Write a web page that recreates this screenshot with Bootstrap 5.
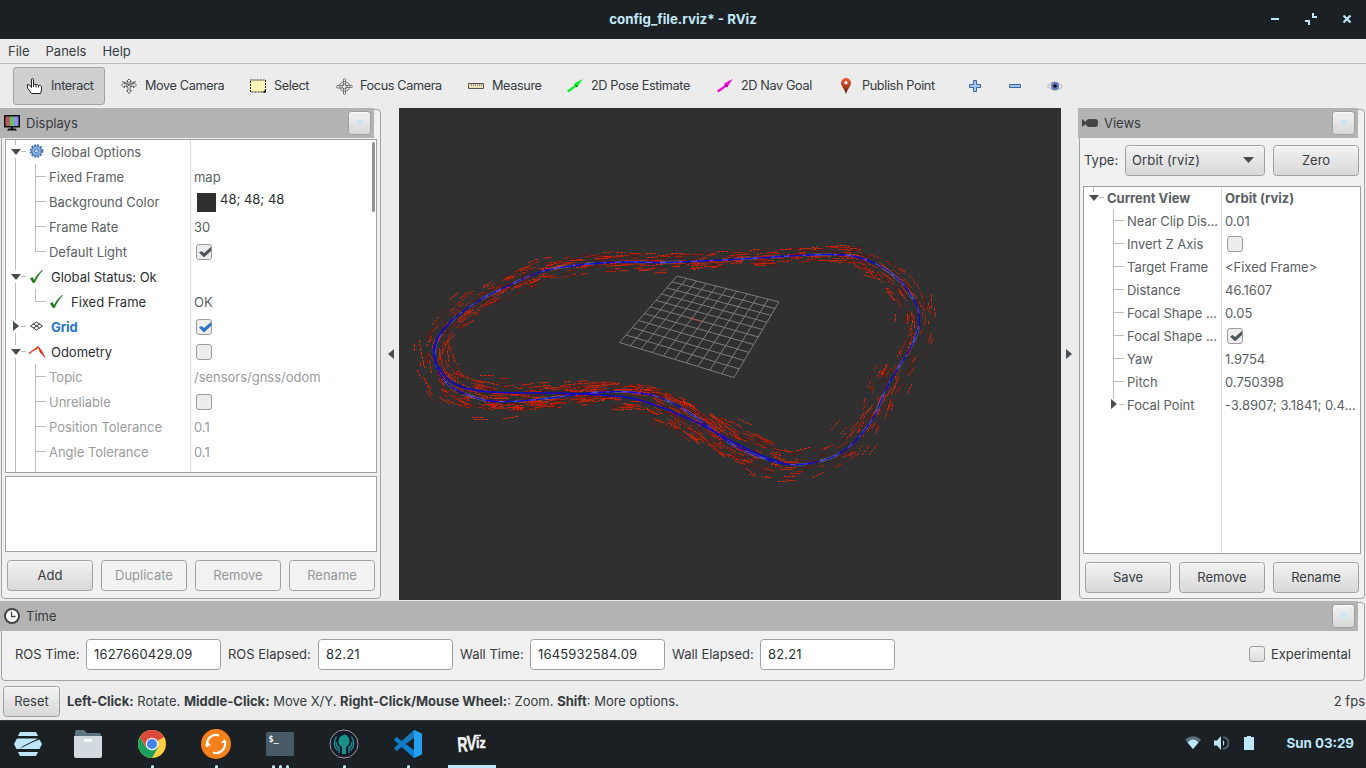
<!DOCTYPE html>
<html lang="en">
<head>
<meta charset="utf-8">
<title>config_file.rviz* - RViz</title>
<link href="https://cdn.jsdelivr.net/npm/bootstrap@5.3.0/dist/css/bootstrap.min.css" rel="stylesheet">
<style>
body{width:1366px;height:768px;overflow:hidden;background:#ececec;color:#363b3f;font-family:"Inter",sans-serif;font-size:13px;line-height:20px}
svg{display:block;flex:none}
b{font-weight:700}
.win-title{height:39px;background:#1b2024;color:#c4e7f9;padding-bottom:1px}
.win-title .caption{font-weight:700;font-size:13.33px}
.win-ctl{right:0;top:0;height:38px;padding-right:11px;gap:20px}
.menus{height:25px;border-bottom:1px solid #bcbcbc;padding:0 8px;gap:16px}
.tools{height:44px;padding:3px 0 3px 13px;font-size:12.7px;letter-spacing:-.38px}
.tool{height:38px;padding-left:14px;gap:8px;white-space:nowrap}
.tool span{margin-top:-1px}
.tool.on{background:#cfcfcf;border:1px solid #a3a3a3;border-radius:3px;padding-left:13px;margin-right:2px}
.w1{width:92px}.w2{width:129px}.w3{width:86px}.w4{width:132px}.w5{width:99px}.w6{width:150px}.w7{width:121px}.w8{width:129px}.w9{width:40px}
.pull{margin-left:-1px}
.work{height:493px}
.dock{position:relative}
.dock::before{content:"";position:absolute;inset:1px 0 2px 1px;border:1px solid #a2a2a2;border-radius:4px;background:#f1f1f1}
.dock>*{position:relative}
.dock-left{width:381px}.dock-right{width:287px;margin-left:-1px}
.dock-head{height:30px;background:#b3b3b3;padding:0 3px 0 4px;gap:6px}
.dock-left .dock-head{width:374px}
.dock-right .dock-head{width:280px}
.qbtn{height:31px;border:1px solid #a0a0a0;border-radius:3.5px;background:linear-gradient(#f2f2f2,#d8d8d8);color:#363b3f;font-size:13px;line-height:20px;padding:0 0 1px;display:flex;align-items:center;justify-content:center;box-shadow:inset 0 1px #fafafa}
.qbtn.off{background:#f2f2f2;color:#969899;box-shadow:none}
.qbtn.closer{width:23px;height:24px;margin-left:auto}
.b86{width:86px}
.tree{background:#fff;border:1px solid #9f9f9f;overflow:hidden;color:#5b6064;position:relative;letter-spacing:-.02px}
.tree-left{width:372px;height:334px;margin:1px 0 0 5px;--row:25px;--split:184px}
.tree-right{width:278px;height:368px;margin-left:5px;--row:23px;--split:137px}
.tree::after{content:"";position:absolute;left:var(--split);top:0;bottom:0;width:1px;background:#dcdcdc}
.trow{display:grid;grid-template-columns:var(--split) 1fr;height:var(--row);margin-top:0}
.trow:first-of-type,.thumb+.trow{margin-top:-1px}
.tname,.tval{display:flex;align-items:center;overflow:hidden;white-space:nowrap;min-width:0}
.tval{padding-left:4px}
.br{width:20px;height:100%;flex:none;background:linear-gradient(#bdbdbd,#bdbdbd) 9px 0/1px 100% no-repeat}
.br.tee{background:linear-gradient(#bdbdbd,#bdbdbd) 9px 0/1px 100% no-repeat,linear-gradient(#bdbdbd,#bdbdbd) 9px 50%/11px 1px no-repeat}
.br.end{background:linear-gradient(#bdbdbd,#bdbdbd) 9px 0/1px 50% no-repeat,linear-gradient(#bdbdbd,#bdbdbd) 9px 50%/11px 1px no-repeat}
.br.open,.br.shut{position:relative;background:linear-gradient(#bdbdbd,#bdbdbd) 9px 0/1px 6px no-repeat,linear-gradient(#bdbdbd,#bdbdbd) 9px 19px/1px 20px no-repeat,linear-gradient(#bdbdbd,#bdbdbd) 15px 50%/5px 1px no-repeat}
.br.root,.br.last{position:relative;background:linear-gradient(#bdbdbd,#bdbdbd) 9px 0/1px 6px no-repeat,linear-gradient(#bdbdbd,#bdbdbd) 15px 50%/5px 1px no-repeat}
.br.none{background:none}
.br.open::after,.br.root::after{content:"";position:absolute;left:5px;top:calc(50% - 3px);border:5px solid transparent;border-top:6px solid #474c4f;border-bottom:0}
.br.shut::after,.br.last::after{content:"";position:absolute;left:7px;top:calc(50% - 5.5px);border:5.5px solid transparent;border-left:6px solid #474c4f;border-right:0}
.ic{width:25px;flex:none;padding-left:3px}
.lbl{padding-left:3px}
.ic+.lbl{padding-left:0}
.ink{color:#2b3034}.dim{color:#9a9c9e}.blue{color:#2a76c6}.soft{color:#5b6064}
.cbx{width:16px;height:16px;border:1px solid #9c9c9c;border-radius:3px;background:#ededed;margin-left:2px;flex:none}
.swatch{width:19px;height:19px;background:#303030;margin:2px 4px 0 3px}
.rgb{padding-bottom:6px}
.thumb{right:1px;top:2px;width:3px;height:70px;background:#8f9394;border-radius:2px;z-index:2}
.notes{width:372px;height:76px;margin:3px 0 0 5px;background:#fff;border:1px solid #9f9f9f}
.gutter{width:18px;padding-bottom:2px}
.gutter.gl{padding-left:2px}.gutter.gr{padding-right:3px}
.view3d{width:662px;height:492px;background:#303030}
.typebar{height:48px;padding:0 0 4px 6px}
.typebar .cap{width:41px}
.typebar .combo{width:140px;padding:0 10px 1px 6px;letter-spacing:.15px}
.foot-l{padding-left:7px}
.clock-dock{height:81px;width:1366px}
.clock-dock::before{inset:1px 1px 1px 1px}
.clock-dock .dock-head{width:1358px}
.fields{height:47px;padding:0 15px}
.l1,.l2,.l3,.l4,.exp{padding-bottom:1px}
.fld{width:135px;height:31px;border:1px solid #a0a0a0;border-radius:3.5px;background:#fff;padding:0 7px;line-height:28px;margin-right:7px;letter-spacing:.15px}
.l1{width:71px}.l2{width:90px}.l3{width:70px}.l4{width:88px}
.exp{margin-left:6px}
.fields .cbx{margin-bottom:1px;background:linear-gradient(#f2f2f2,#dedede)}
.stat{height:38px;padding:0 1px 0 3px}
.reset{width:57px;margin-right:7px}
.taskbar{height:48px;background:#1b2024;border-top:1px solid #33393d}
.task{width:64px;height:47px;position:relative;padding-bottom:2px}
.task:first-child{width:56px}
.dots{position:absolute;bottom:0;left:0;right:0;gap:4px}
.dots i{width:3px;height:3px;border-radius:2px 2px 0 0;background:#bde6fb}
.activebar{position:absolute;bottom:0;left:8px;width:48px;height:3px;background:#bde6fb}
.tray{color:#bde6fb;padding:0 12px 3px 0;font-size:13.33px}
.tray .vol{margin-left:13px}.tray .bat{margin-left:14px}.tray .now{margin-left:32px}
</style>
</head>
<body class="d-flex flex-column">
<header class="win-title position-relative d-flex align-items-center justify-content-center">
  <span class="caption">config_file.rviz* - RViz</span>
  <div class="win-ctl position-absolute d-flex align-items-center">
    <svg width="16" height="16" fill="#bde6fb"><path d="M4 7h8v2H4z"/></svg>
    <svg width="16" height="16" fill="#bde6fb"><path d="M9 2h2v3h3v2H9zM2 9h5v5H5v-3H2z"/></svg>
    <svg width="16" height="16" stroke="#bde6fb" stroke-width="2.2"><path d="M4.500 4.500 11.500 11.500M11.500 4.500 4.500 11.500"/></svg>
  </div>
</header>
<nav class="menus d-flex align-items-center"><span>File</span><span>Panels</span><span>Help</span></nav>
<div class="tools d-flex">
  <div class="tool on w1 d-flex align-items-center"><svg width="16" height="16" fill="#fff" stroke="#222"><path d="M4.500 9.500V2q0-1.500 1-1.500t1 1.500v4.500q1.500-1 2.500.5 1.500-1 2.500.5 2-1 3 1v3.500L13.500 15.500h-9L.5 10V6.500l2 .5 2 2.500M6.500 6v3M9 7v2.500M11.500 7.500v2"/></svg><span>Interact</span></div>
  <div class="tool w2 d-flex align-items-center"><svg width="16" height="16" viewBox="0 0 16 16" fill="#f4f4f4" stroke="#555" stroke-width=".9"><path d="M8 1 10.500 3.500H9V6h3.500V4L15.500 7 12.500 10V8H10l-1 2v2.500h1.500L8 15.500 5.500 12.500H7V10L6 8H3.500v2L.5 7 3.500 4v2H7V3.500H5.500z"/><path d="M1 3.500l4 1.500 6 4M15 3.500l-4 1.500-6 4" fill="none"/></svg><span>Move Camera</span></div>
  <div class="tool w3 d-flex align-items-center"><svg width="16" height="14"><path d="M.5 1h15v12H.5z" fill="#fbf5b8" stroke="#222" stroke-dasharray="2 1"/><path d="M16 10v3.500h-3.500z"/></svg><span>Select</span></div>
  <div class="tool w4 d-flex align-items-center"><svg width="17" height="17" viewBox="0 0 17 17" fill="none" stroke="#777"><circle cx="8.500" cy="8.500" r="5"/><circle cx="8.500" cy="8.500" r="2.500"/><path d="M7.500 16V10H1L.5 8.500 1 7.500h6.500V1l1-.5 1 .5v6.500H16l.5 1-.5 1H9.500V16l-1 .5z"/></svg><span class="pull">Focus Camera</span></div>
  <div class="tool w5 d-flex align-items-center"><svg width="16" height="16"><path d="M.5 5.500h15v5H.5z" fill="#e9deb0" stroke="#555"/><path d="M3.500 6v2M5.500 6v2M7.500 6v2M9.500 6v2M11.500 6v2M13.500 6v2" stroke="#999"/></svg><span>Measure</span></div>
  <div class="tool w6 d-flex align-items-center"><svg width="16" height="16" fill="#0ef02e"><path d="M15.800 1 8 5l-.8 1L8 7 0 12.500 1.500 14.500 9 9l1.500.2L11 8z"/><path d="m7 6 4 2.500-1.500.5z" fill="#064d10"/></svg><span>2D Pose Estimate</span></div>
  <div class="tool w7 d-flex align-items-center"><svg width="16" height="16" fill="#f50ae0"><path d="M15.800 1 8 5l-.8 1L8 7 0 12.500 1.500 14.500 9 9l1.500.2L11 8z"/><path d="m7 6 4 2.500-1.500.5z" fill="#5d0455"/></svg><span>2D Nav Goal</span></div>
  <div class="tool w8 d-flex align-items-center"><svg width="16" height="16"><defs><linearGradient id="pin" x2="0" y2="1"><stop stop-color="#f4593a"/><stop offset=".6" stop-color="#a03a1c"/><stop offset="1" stop-color="#30200c"/></linearGradient></defs><path d="M8 0a5 5 0 0 1 5 5c0 3-3 5-5 11C6 10 3 8 3 5a5 5 0 0 1 5-5z" fill="url(#pin)"/><circle cx="8" cy="4.800" r="1.700" fill="#f6f2f0"/></svg><span>Publish Point</span></div>
  <div class="tool w9 d-flex align-items-center"><svg width="16" height="16" fill="#a8c4e8" stroke="#3566a8"><path d="M6.500 2.500h3v4h4v3h-4v4h-3v-4h-4v-3h4z"/></svg></div>
  <div class="tool w9 d-flex align-items-center"><svg width="16" height="16" fill="#a8c4e8" stroke="#3566a8"><path d="M2.500 6.500h11v3h-11z"/></svg></div>
  <div class="tool w9 d-flex align-items-center"><svg width="16" height="16"><path d="M.5 8.500Q7-1 15.500 8.500 8 16 .5 8.500z" fill="#ececf0" stroke="#aaa"/><circle cx="8" cy="8" r="4" fill="#5f76b8"/><circle cx="8" cy="8" r="1.800" fill="#0a0d22"/></svg></div>
</div>
<main class="work d-flex">
  <section class="dock dock-left">
    <div class="dock-head d-flex align-items-center"><svg width="16" height="16"><path d="M0 0h16v12.500H0z" fill="#111"/><path d="M1.500 1.500h4.500v9.500H1.500z" fill="#b06060"/><path d="M6 1.500h4v9.500H6z" fill="#6abf6a"/><path d="M10 1.500h4.500v9.500H10z" fill="#8f8fe6"/><path d="M7 12h2v1.500h2.500L13 15.500H3L4.500 13.500H7z" fill="#111"/></svg><span>Displays</span>
      <span class="qbtn closer"><svg width="7" height="7" stroke="#bde6fb" stroke-width="1.400"><path d="M1.500 1.500l4 4M5.500 1.500l-4 4"/></svg></span></div>
    <div class="tree tree-left">
      <div class="thumb position-absolute"></div>
      <div class="trow"><div class="tname"><i class="br open"></i><span class="ic"><svg width="15" height="15"><circle cx="7.500" cy="7" r="5.800" fill="none" stroke="#3f70b0" stroke-width="2" stroke-dasharray="2 1.040"/><circle cx="7.500" cy="7" r="4.800" fill="#8fb3e0" stroke="#3f70b0"/><circle cx="7.500" cy="7" r="2" fill="#c8dbf2" stroke="#3f70b0"/></svg></span><span class="lbl">Global Options</span></div><div class="tval"></div></div>
      <div class="trow"><div class="tname"><i class="br"></i><i class="br tee"></i><span class="lbl">Fixed Frame</span></div><div class="tval">map</div></div>
      <div class="trow"><div class="tname"><i class="br"></i><i class="br tee"></i><span class="lbl">Background Color</span></div><div class="tval ink"><span class="swatch"></span><span class="rgb">48; 48; 48</span></div></div>
      <div class="trow"><div class="tname"><i class="br"></i><i class="br tee"></i><span class="lbl">Frame Rate</span></div><div class="tval">30</div></div>
      <div class="trow"><div class="tname"><i class="br"></i><i class="br end"></i><span class="lbl">Default Light</span></div><div class="tval"><span class="cbx"><svg width="14" height="14" fill="#505558"><path d="M2 7.500 4.500 6 7 8 14 2v4L7.500 12H6.500z"/></svg></span></div></div>
      <div class="trow ink"><div class="tname"><i class="br open"></i><span class="ic"><svg width="14" height="14" fill="#1f7a1f"><path d="M1 8.500 3.500 7l1.500 3Q8 4 13 0h1Q8.500 6 5.500 13H4z"/></svg></span><span class="lbl">Global Status: Ok</span></div><div class="tval"></div></div>
      <div class="trow ink"><div class="tname"><i class="br"></i><i class="br end"></i><span class="ic"><svg width="14" height="14" fill="#1f7a1f"><path d="M1 8.500 3.500 7l1.500 3Q8 4 13 0h1Q8.500 6 5.500 13H4z"/></svg></span><span class="lbl">Fixed Frame</span></div><div class="tval soft">OK</div></div>
      <div class="trow"><div class="tname"><i class="br shut"></i><span class="ic"><svg width="15" height="11" fill="none" stroke="#333"><path d="M1.500 5 7.500 1 13.500 5 7.500 9zM4.500 3l6 4M10.500 3l-6 4"/></svg></span><b class="lbl blue">Grid</b></div><div class="tval"><span class="cbx"><svg width="14" height="14" fill="#2a76c6"><path d="M2 7.500 4.500 6 7 8 14 2v4L7.500 12H6.500z"/></svg></span></div></div>
      <div class="trow ink"><div class="tname"><i class="br open"></i><span class="ic"><svg width="17" height="14" fill="#e8200a" stroke="#e8200a" stroke-width=".6"><path d="M0 8 5 4.500 9 1.500 8 4 4.500 5.500 0 9zM9 1.500 12.500 5.500 16 12.500 14.500 11 12.500 8 11.500 8z"/></svg></span><span class="lbl">Odometry</span></div><div class="tval"><span class="cbx"></span></div></div>
      <div class="trow dim"><div class="tname"><i class="br"></i><i class="br tee"></i><span class="lbl">Topic</span></div><div class="tval">/sensors/gnss/odom</div></div>
      <div class="trow dim"><div class="tname"><i class="br"></i><i class="br tee"></i><span class="lbl">Unreliable</span></div><div class="tval"><span class="cbx"></span></div></div>
      <div class="trow dim"><div class="tname"><i class="br"></i><i class="br tee"></i><span class="lbl">Position Tolerance</span></div><div class="tval">0.1</div></div>
      <div class="trow dim"><div class="tname"><i class="br"></i><i class="br tee"></i><span class="lbl">Angle Tolerance</span></div><div class="tval">0.1</div></div>
      <div class="trow"><div class="tname"><i class="br"></i><i class="br"></i></div><div></div></div>
    </div>
    <div class="notes"></div>
    <div class="d-flex gap-2 pt-2 foot-l"><button class="qbtn b86">Add</button><button class="qbtn b86 off">Duplicate</button><button class="qbtn b86 off">Remove</button><button class="qbtn b86 off">Rename</button></div>
  </section>
  <div class="gutter gl d-flex align-items-center justify-content-center"><svg width="6" height="10" fill="#4a4f52"><path d="M6 0v10L0 5z"/></svg></div>
  <svg id="scene" class="view3d" width="662" height="492" viewBox="399 108 662 492"></svg>
  <div class="gutter gr d-flex align-items-center justify-content-center"><svg width="6" height="10" fill="#4a4f52"><path d="M0 0v10l6-5z"/></svg></div>
  <section class="dock dock-right">
    <div class="dock-head d-flex align-items-center"><svg width="16" height="10" fill="#454545"><path d="M0 1l4 3V3q1-2 3-2h6q3 0 3 3v2q0 3-3 3H7Q5 9 4 7V6L0 9z"/></svg><span>Views</span>
      <span class="qbtn closer"><svg width="7" height="7" stroke="#bde6fb" stroke-width="1.400"><path d="M1.500 1.500l4 4M5.500 1.500l-4 4"/></svg></span></div>
    <div class="typebar d-flex align-items-center"><span class="cap">Type:</span>
      <span class="qbtn combo justify-content-between">Orbit (rviz)<svg width="11" height="6" fill="#474c4f"><path d="M0 0h11L5.500 6z"/></svg></span>
      <button class="qbtn b86 ms-2">Zero</button></div>
    <div class="tree tree-right">
      <div class="trow"><div class="tname"><i class="br root"></i><b class="lbl">Current View</b></div><div class="tval"><b>Orbit (rviz)</b></div></div>
      <div class="trow"><div class="tname"><i class="br none"></i><i class="br tee"></i><span class="lbl">Near Clip Dis...</span></div><div class="tval">0.01</div></div>
      <div class="trow"><div class="tname"><i class="br none"></i><i class="br tee"></i><span class="lbl">Invert Z Axis</span></div><div class="tval"><span class="cbx"></span></div></div>
      <div class="trow"><div class="tname"><i class="br none"></i><i class="br tee"></i><span class="lbl">Target Frame</span></div><div class="tval">&lt;Fixed Frame&gt;</div></div>
      <div class="trow"><div class="tname"><i class="br none"></i><i class="br tee"></i><span class="lbl">Distance</span></div><div class="tval">46.1607</div></div>
      <div class="trow"><div class="tname"><i class="br none"></i><i class="br tee"></i><span class="lbl">Focal Shape ...</span></div><div class="tval">0.05</div></div>
      <div class="trow"><div class="tname"><i class="br none"></i><i class="br tee"></i><span class="lbl">Focal Shape ...</span></div><div class="tval"><span class="cbx"><svg width="14" height="14" fill="#505558"><path d="M2 7.500 4.500 6 7 8 14 2v4L7.500 12H6.500z"/></svg></span></div></div>
      <div class="trow"><div class="tname"><i class="br none"></i><i class="br tee"></i><span class="lbl">Yaw</span></div><div class="tval">1.9754</div></div>
      <div class="trow"><div class="tname"><i class="br none"></i><i class="br tee"></i><span class="lbl">Pitch</span></div><div class="tval">0.750398</div></div>
      <div class="trow"><div class="tname"><i class="br none"></i><i class="br last"></i><span class="lbl">Focal Point</span></div><div class="tval">-3.8907; 3.1841; 0.4...</div></div>
    </div>
    <div class="d-flex gap-2 pt-2 foot-l"><button class="qbtn b86">Save</button><button class="qbtn b86">Remove</button><button class="qbtn b86">Rename</button></div>
  </section>
</main>
<section class="dock clock-dock">
  <div class="dock-head d-flex align-items-center"><svg width="16" height="16" fill="#fff" stroke="#444"><circle cx="8" cy="8" r="7" stroke-width="2"/><path d="M7.500 3.500V8.500H11.500" stroke-width="1.300" fill="none"/></svg><span>Time</span>
    <span class="qbtn closer"><svg width="7" height="7" stroke="#bde6fb" stroke-width="1.400"><path d="M1.500 1.500l4 4M5.500 1.500l-4 4"/></svg></span></div>
  <div class="fields d-flex align-items-center">
    <span class="l1">ROS Time:</span><span class="fld ink">1627660429.09</span>
    <span class="l2">ROS Elapsed:</span><span class="fld ink">82.21</span>
    <span class="l3">Wall Time:</span><span class="fld ink">1645932584.09</span>
    <span class="l4">Wall Elapsed:</span><span class="fld ink">82.21</span>
    <span class="cbx ms-auto"></span><span class="exp">Experimental</span>
  </div>
</section>
<div class="stat d-flex align-items-center"><button class="qbtn reset">Reset</button><span><b>Left-Click:</b> Rotate. <b>Middle-Click:</b> Move X/Y. <b>Right-Click/Mouse Wheel:</b>: Zoom. <b>Shift</b>: More options.</span><span class="ms-auto">2 fps</span></div>
<footer class="taskbar d-flex align-items-center">
  <div class="task d-flex align-items-center justify-content-center"><svg width="28" height="24" fill="#bde6fb"><path d="M6 0h16l2 4H4zM3 6.500h21L10 13.500 5 17H2.500L0 12zM25.500 7.500 28 12l-2.500 5H5L18 10.500zM4 20h20l-2 4H6z"/></svg></div>
  <div class="task d-flex align-items-center justify-content-center"><svg width="28" height="28"><path d="M1 2q0-2 2-2h7l3 3h12q2 0 2 2v4H1z" fill="#5d7480"/><path d="M0 6h28v20q0 2-2 2H2q-2 0-2-2z" fill="#d2dae0"/><path d="M10 9h8v2.500h-8z" fill="#fff"/></svg></div>
  <div class="task d-flex align-items-center justify-content-center"><svg width="28" height="28" viewBox="0 0 28 28"><circle cx="14" cy="14" r="14" fill="#ffcf43"/><path d="M14 14 8 17.500 1.900 7A14 14 0 0 1 26.100 7z" fill="#dd4b3e"/><path d="M1.900 7A14 14 0 0 0 14 28l6-10.500H8z" fill="#19a05e"/><circle cx="14" cy="14" r="6.300" fill="#f1f1f1"/><circle cx="14" cy="14" r="5" fill="#4285f4"/></svg><span class="dots d-flex justify-content-center"><i></i></span></div>
  <div class="task d-flex align-items-center justify-content-center"><svg width="30" height="30" viewBox="0 0 30 30"><circle cx="15" cy="15" r="15" fill="#f68019"/><g fill="none" stroke="#fff" stroke-width="2.200"><path d="M6.500 18A9 9 0 0 1 18 6.500M23.500 12A9 9 0 0 1 12 23.500"/></g><path d="M4 16.500h6L6.500 12zM20 14h6l-2.500-4z" fill="#fff"/></svg><span class="dots d-flex justify-content-center"><i></i></span></div>
  <div class="task d-flex align-items-center justify-content-center"><svg width="28" height="24"><rect width="28" height="24" rx="1.500" fill="#485a65"/><text x="2.500" y="10" font-family="DejaVu Sans Mono" font-size="8.500" font-weight="700" fill="#f5f5f5">$_</text></svg><span class="dots d-flex justify-content-center"><i></i><i></i><i></i></span></div>
  <div class="task d-flex align-items-center justify-content-center"><svg width="30" height="30" viewBox="0 0 30 30"><circle cx="15" cy="15" r="14" fill="#161a2b" stroke="#999"/><path d="M15 5.500c4 0 5.500 4 5.500 7S18 17 17 18v7h-4v-7c-1-1-3.500-2-3.500-5s1.500-7 5.500-7z" fill="#179287"/><path d="M7.500 7.500q-5 8 1 14M22.500 7.500q5 8-1 14M10 17.500V24M20 17.500V24M7 13q0 4 3 6.500M23 13q0 4-3 6.500" fill="none" stroke="#179287" stroke-width="1.300"/></svg><span class="dots d-flex justify-content-center"><i></i></span></div>
  <div class="task d-flex align-items-center justify-content-center"><svg width="28" height="28" viewBox="0 0 28 28"><path d="M20 28 1 11q-1.500-1.500 0-2.500L2.500 7 21 21z" fill="#0b7fd0"/><path d="M20 0 1 17q-1.500 1.500 0 2.500L2.500 21 21 7z" fill="#1579c0"/><path d="M20 0 28 3.500v21L20 28z" fill="#26a0f2"/></svg><span class="dots d-flex justify-content-center"><i></i></span></div>
  <div class="task d-flex align-items-center justify-content-center"><svg width="32" height="30" fill="#f5f5f5" stroke="#f5f5f5" stroke-width=".4" font-family="Liberation Sans Narrow, Liberation Sans" font-weight="700"><text transform="translate(2 23) rotate(-4) scale(.66 1)" font-size="21">R</text><text transform="translate(10.500 21) scale(.74 1)" font-size="20">V</text><text transform="translate(20 18.500) scale(.9 1)" font-size="14">iz</text><path d="M18 6.500h7" stroke-width="1.500"/></svg><span class="activebar"></span></div>
  <div class="tray ms-auto d-flex align-items-center">
    <svg width="16" height="14"><path d="M0 3.500Q8-3 16 3.500L8 13z" fill="#5a6f7b"/><path d="M2.500 6.500Q8 .5 13.500 6.500L8 13z" fill="#bde6fb"/></svg>
    <svg class="vol" width="16" height="14"><path d="M0 4.500h3L7 0v14L3 9.500H0zM9 4q2.500 3 0 6z" fill="#bde6fb"/><path d="M9 1q5.500 1 5.500 6T9 13" fill="none" stroke="#566a75" stroke-width="1.500"/></svg>
    <svg class="bat" width="10" height="14"><path d="M0 1h3V0h4v1h3v13H0z" fill="#bde6fb"/></svg>
    <span class="now fw-bold">Sun 03:29</span>
  </div>
</footer>
<script>
// Lap path: x, y, inward reach, outward reach, arrows per step
const lap=[[660,262.5,8,8,26],[700,261,7,8,22],[750,258.5,7,8,26],[790,256,7,7,22],[830,254.5,8,8,24],[855,256.5,7,7,16],[880,266,14,6,22],[900,281,14,12,14],[912,297,16,12,10],[919,313,14,16,10],[918,330,13,14,10],[910,349,9,14,11],[897,370,16,12,18],[885,391,20,12,18],[876,413,12,14,14],[865,430,9,9,9],[850,446,24,12,10],[830,458,16,12,7],[805,464,10,16,10],[785,464,12,17,18],[760,457,17,17,38],[735,446,22,16,42],[715,432,14,13,36],[700,420,10,22,40],[680,407,7,22,42],[655,396,7,20,34],[630,392,9,16,26],[605,392,9,12,32],[580,394,10,11,36],[550,398,13,10,36],[520,401,17,10,36],[490,401,18,9,34],[465,394,16,12,22],[447,383,14,20,18],[437,368,18,21,14],[435,350,16,14,14],[440,335,10,12,16],[455,318,12,14,22],[480,300,12,13,26],[510,285,11,9,28],[540,272,10,10,18],[570,266,9,8,16],[600,263,9,9,24],[630,262,8,10,22]];
const fork=[[785,464],[760,455],[735,443],[715,432],[700,424],[680,415],[655,405],[630,398],[600,395],[560,393],[520,393],[480,391],[455,384],[440,370],[434,355],[438,337],[453,319]];
let seed=4711;const rnd=()=>(seed=(seed*16807)%2147483647)/2147483647;
const spline=(p,closed)=>{const n=p.length,g=i=>closed?p[(i+n)%n]:p[Math.max(0,Math.min(n-1,i))];let d=`M${p[0][0]} ${p[0][1]}`;
 for(let i=0;i<(closed?n:n-1);i++){const a=g(i-1),b=g(i),c=g(i+1),e=g(i+2);d+=`C${b[0]+(c[0]-a[0])/6} ${b[1]+(c[1]-a[1])/6} ${c[0]-(e[0]-b[0])/6} ${c[1]-(e[1]-b[1])/6} ${c[0]} ${c[1]}`}return d};
let out='';
// ground grid, 10 x 10 cells in perspective
const q=[[677,276],[779,302],[734,377.5],[619.5,342.5]];
const [x0,y0,x1,y1,x2,y2,x3,y3]=q.flat(),dx1=x1-x2,dx2=x3-x2,dx=x0-x1+x2-x3,dy1=y1-y2,dy2=y3-y2,dy=y0-y1+y2-y3,D=dx1*dy2-dx2*dy1,G=(dx*dy2-dx2*dy)/D,H=(dx1*dy-dx*dy1)/D;
const pr=(u,v)=>{const w=G*u+H*v+1;return((x1-x0+G*x1)*u+(x3-x0+H*x3)*v+x0)/w+' '+((y1-y0+G*y1)*u+(y3-y0+H*y3)*v+y0)/w};
let gd='';for(let i=0;i<=10;i++)gd+=`M${pr(i/10,0)}L${pr(i/10,1)}M${pr(0,i/10)}L${pr(1,i/10)}`;
out+=`<path d="${gd}" fill="none" stroke="#808080" stroke-width=".95"/><path d="M689.500 318 702 321.500" stroke="#d0422e" stroke-dasharray="2 1"/>`;
// odometry arrows
const tones=['#d42204','#dc2606','#a81c0a','#701a14','#551815','#c82206'];
const paths=tones.map(()=>'');
lap.forEach((p,i)=>{const r=lap[(i+1)%lap.length];let tx=r[0]-p[0],ty=r[1]-p[1];const L=Math.hypot(tx,ty);tx/=L;ty/=L;
 for(let k=0;k<p[4]*1.5;k++){const t=rnd(),s=rnd()<.48?-1:1,reach=s<0?p[3]*(1-t)+r[3]*t:p[2]*(1-t)+r[2]*t,far=rnd()<.06?1.35:1.08,o=s*Math.pow(rnd(),1.1)*reach*far,a=(rnd()-.5)*.16,len=(5+rnd()*10)*(Math.abs(tx)*.3+.65);
 const cx=p[0]+tx*L*t-ty*o,cy=p[1]+ty*L*t+tx*o,ux=tx-ty*a,uy=ty+tx*a;
 paths[Math.floor(rnd()*6)]+=`M${(cx-ux*len/2).toFixed(1)} ${(cy-uy*len/2).toFixed(1)}l${(ux*len).toFixed(1)} ${(uy*len).toFixed(1)}`}});
// stray arrows away from the lap
[[414,344,1,8],[419,340,2,12],[421,352,3,14],[417,370,4,8],[424,378,6,12],[454,360,6,6],[452,386,12,4],[472,417,12,1],[474,419,14,0],[503,419,16,-3],[480,375,14,1],[528,263,10,-4],[565,277,12,-3],[931,294,1,9],[934,308,2,9],[928,303,3,10],[908,492,0,0],[908,393,4,-9],[862,455,8,-10],[869,455,8,-10],[831,430,9,-10],[796,451,15,-4],[738,419,14,6],[720,418,14,5],[778,481.500,18,-1],[812,478,12,-6],[683,401,12,6],[645,253,12,0],[895,314,0,8]].forEach(([x,y,w,h])=>paths[1]+=`M${x} ${y}l${w} ${h}`);
paths.forEach((d,i)=>out+=`<path d="${d}" fill="none" stroke="${tones[i]}" stroke-width=".95" shape-rendering="${i%3?'crispEdges':'auto'}" ${i%2?'stroke-dasharray="3 1"':''}/>`);
const main=spline(lap,true),alt=spline(fork,false);
out+=`<g fill="none"><path d="${main}" stroke="#77756a" stroke-width="2.600" stroke-dasharray="22 14 9 30" opacity=".75"/><path d="${main}" stroke="#0b08d8" stroke-width="1.300"/><path d="${main}" stroke="#6a50d8" stroke-width="1" stroke-dasharray="6 13 3 9"/><path d="${alt}" stroke="#0b08d0" stroke-width="1.500"/></g>`;
document.getElementById('scene').innerHTML=out;
</script>
<script src="https://cdn.jsdelivr.net/npm/bootstrap@5.3.0/dist/js/bootstrap.bundle.min.js"></script>
</body>
</html>
